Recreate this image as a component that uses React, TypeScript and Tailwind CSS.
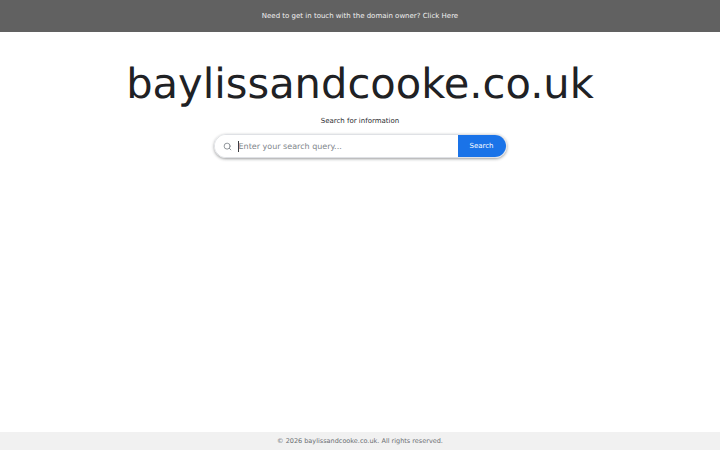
import { Search } from 'lucide-react'

export default function App() {
  return (
    <div className="flex h-screen flex-col overflow-hidden bg-white font-['DejaVu_Sans',sans-serif] [text-rendering:geometricPrecision]">
      <div className="flex h-8 items-center justify-center bg-[#616161] pt-px text-[7px] text-[#f0f0f0]">
        Need to get in touch with the domain owner? Click Here
      </div>

      <main className="flex flex-1 flex-col items-center pt-[25px]">
        <h1 className="text-[41.6px] leading-[54px] text-[#202124]">baylissandcooke.co.uk</h1>
        <p className="mt-[3.5px] text-[7px] leading-[12px] text-[#2c2d30]">Search for information</p>

        <div className="mt-[7.5px] flex h-[24px] w-[293px] overflow-hidden rounded-full border border-[#dfe1e5] shadow-[0_1px_3px_rgba(32,33,36,0.45)]">
          <div className="flex flex-1 items-center bg-white pl-[8px] pt-px">
            <Search className="size-[9px] text-[#8a8f94]" strokeWidth={2.5} />
            <div className="ml-[6px] h-[11px] w-px bg-[#3c3d40]" />
            <span className="text-[8px] text-[#80858a]">Enter your search query...</span>
          </div>
          <button className="w-[48px] bg-[#1a73e8] pt-px text-[7px] text-white">Search</button>
        </div>
      </main>

      <footer className="flex h-[18px] items-center justify-center bg-[#f1f1f1] pt-px text-[6.5px] text-[#6a6e72]">
        © 2026 baylissandcooke.co.uk. All rights reserved.
      </footer>
    </div>
  )
}
